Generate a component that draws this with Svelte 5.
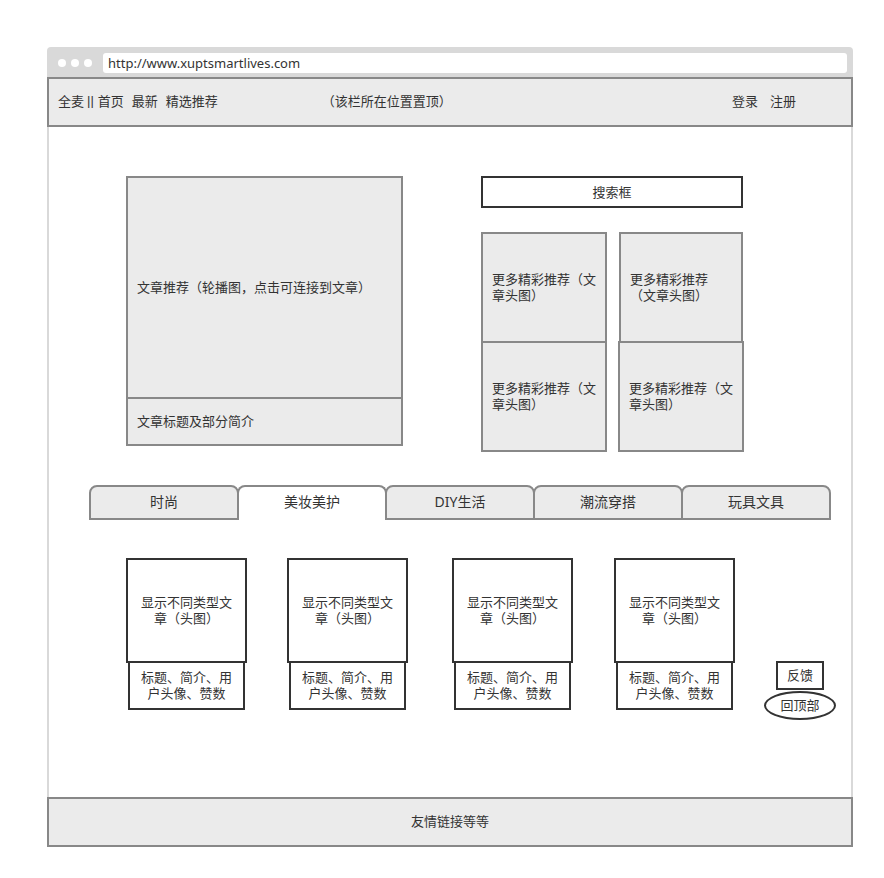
<script>
  const navLinks = ['首页', '最新', '精选推荐'];
  const picks = [0, 1, 2, 3];
  const tabs = ['时尚', '美妆美护', 'DIY生活', '潮流穿搭', '玩具文具'];
  const cards = [0, 1, 2, 3];
  let active = $state(1);
</script>

<div class="page">
  <div class="browser">
    <div class="chrome">
      <i class="dot"></i><i class="dot"></i><i class="dot"></i>
      <input class="url" type="text" aria-label="网址" value="http://www.xuptsmartlives.com" />
    </div>

    <header class="bar nav">
      <nav>
        <a class="brand" href="#home">全麦</a>
        <span class="sep">||</span>
        {#each navLinks as link}
          <a class="item" href="#{link}">{link}</a>
        {/each}
      </nav>
      <span class="note">（该栏所在位置置顶）</span>
      <div class="account">
        <a href="#login">登录</a>
        <a href="#register">注册</a>
      </div>
    </header>

    <main>
      <section class="top">
        <div class="feature">
          <a class="box carousel" href="#article">文章推荐（轮播图，点击可连接到文章）</a>
          <div class="box summary">文章标题及部分简介</div>
        </div>
        <div class="aside">
          <input class="search" type="text" aria-label="搜索框" placeholder="搜索框" />
          <div class="picks">
            {#each picks as i}
              <a class="box pick" class:narrow={i === 1} href="#pick-{i}">更多精彩推荐（文章头图）</a>
            {/each}
          </div>
        </div>
      </section>

      <div class="tabs" role="tablist">
        {#each tabs as tab, i}
          <button
            class="tab"
            class:active={active === i}
            role="tab"
            aria-selected={active === i}
            onclick={() => (active = i)}>{tab}</button>
        {/each}
      </div>

      <section class="content">
        <div class="cards">
          {#each cards as i}
            <article class="card">
              <a class="thumb" href="#card-{i}">显示不同类型文章（头图）</a>
              <p class="caption">标题、简介、用户头像、赞数</p>
            </article>
          {/each}
        </div>
        <div class="tools">
          <button class="feedback">反馈</button>
          <button class="to-top">回顶部</button>
        </div>
      </section>
    </main>

    <footer class="bar foot">友情链接等等</footer>
  </div>
</div>

<style>
  :global(body) {
    background: #fff;
  }
  .page {
    --line: #888;
    --ink: #333;
    --fill: #ebebeb;
    --frame: #d9d9d9;
    padding: 47px 31px 31px 47px;
    font: 13px/16px 'Noto Sans', 'Noto Sans CJK SC', sans-serif;
    color: var(--ink);
    text-spacing-trim: space-all;
  }
  .page * {
    box-sizing: border-box;
  }
  a {
    color: inherit;
    text-decoration: none;
  }
  button,
  input {
    font: inherit;
    color: inherit;
    margin: 0;
    padding: 0 0 2px;
    outline: none;
  }
  .chrome {
    display: flex;
    align-items: center;
    gap: 5px;
    height: 30px;
    padding: 2px 6px 0 11px;
    background: var(--frame);
    border-radius: 4px 4px 0 0;
  }
  .dot {
    width: 8px;
    height: 8px;
    border-radius: 50%;
    background: #fff;
  }
  .url {
    flex: 1;
    min-width: 0;
    height: 20px;
    margin-left: 6px;
    padding: 0 5px;
    border: 0;
    border-radius: 3px;
    background: #fff;
  }
  .bar {
    display: flex;
    align-items: center;
    height: 50px;
    padding-bottom: 2px;
    border: 2px solid var(--line);
    background: var(--fill);
  }
  .nav {
    padding: 0 55px 2px 9px;
  }
  nav {
    display: flex;
  }
  .sep {
    margin: 0 4px 0 3px;
    font-family: 'Liberation Sans', sans-serif;
  }
  .item + .item {
    margin-left: 8px;
  }
  .note {
    margin-left: 104px;
  }
  .account {
    display: flex;
    gap: 12px;
    margin-left: auto;
  }
  .foot {
    justify-content: center;
  }
  main {
    padding: 49px 0 77px;
    border: solid var(--frame);
    border-width: 0 2px;
  }
  .top {
    display: grid;
    grid-template-columns: 277fr 263fr;
    align-items: start;
    gap: 78px;
    padding: 0 107px 0 77px;
  }
  .box {
    display: flex;
    align-items: center;
    padding: 0 9px 2px;
    border: 2px solid var(--line);
    background: var(--fill);
  }
  .carousel {
    height: 223px;
  }
  .summary {
    height: 49px;
    margin-top: -2px;
  }
  .aside {
    display: flex;
    flex-direction: column;
    gap: 24px;
  }
  .search {
    height: 32px;
    margin-right: 1px;
    padding: 0;
    border: 2px solid var(--ink);
    border-radius: 0;
    background: #fff;
    text-align: center;
  }
  .search::placeholder {
    color: var(--ink);
    opacity: 1;
  }
  .picks {
    display: grid;
    grid-template-columns: 1fr 1fr;
    column-gap: 11px;
    padding-bottom: 2px;
  }
  .pick {
    height: 111px;
    margin-bottom: -2px;
  }
  .narrow {
    margin-left: 1px;
    margin-right: 1px;
  }
  .tabs {
    display: flex;
    margin: 33px 20px 38px 40px;
  }
  .tab {
    flex: 1;
    height: 35px;
    border: 2px solid var(--line);
    border-radius: 8px 8px 0 0;
    background: var(--fill);
    font-size: 14px;
  }
  .tab + .tab {
    margin-left: -2px;
  }
  .tab.active {
    padding-bottom: 4px;
    border-bottom: 0;
    background: #fff;
  }
  .content {
    display: flex;
    align-items: flex-start;
    gap: 29px;
    padding: 0 15px 0 77px;
  }
  .cards {
    flex: 1;
    display: grid;
    grid-template-columns: 161fr 165fr 162fr 121fr;
  }
  .card {
    width: 121px;
    text-align: center;
  }
  .thumb,
  .caption {
    display: flex;
    align-items: center;
    padding: 0 10px 2px;
    border: 2px solid var(--ink);
    background: #fff;
  }
  .thumb {
    height: 105px;
  }
  .caption {
    height: 49px;
    margin: -2px 2px 0;
  }
  .tools {
    display: flex;
    flex-direction: column;
    align-items: center;
    gap: 1px;
    width: 72px;
    padding-top: 103px;
  }
  .tools button {
    height: 29px;
    border: 2px solid var(--ink);
    background: #fff;
  }
  .feedback {
    width: 48px;
  }
  .to-top {
    width: 72px;
    border-radius: 50%;
  }
</style>
